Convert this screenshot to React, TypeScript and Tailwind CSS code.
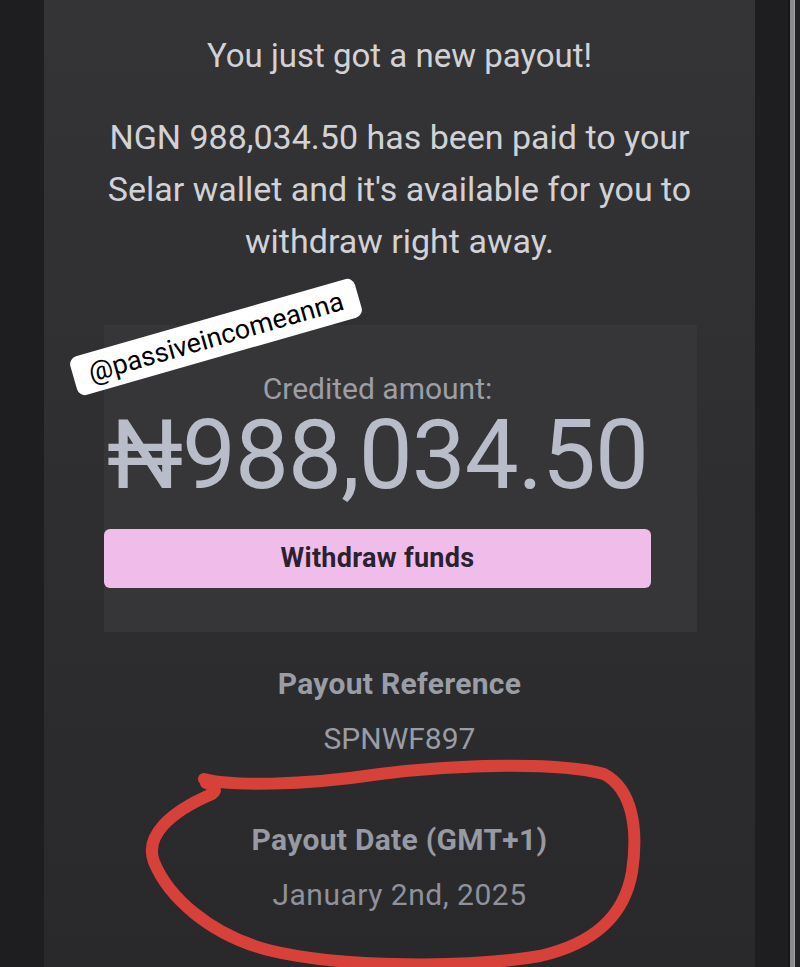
export default function App() {
  return (
    <div className="relative flex h-[967px] w-[800px] overflow-hidden bg-[#1f1f21] font-['Roboto',sans-serif]">
      <div className="w-[44px] shrink-0 bg-[#1e1e20]" />

      <div className="flex w-[711px] shrink-0 flex-col items-center bg-gradient-to-b from-[#343436] to-[#29292b] text-center">
        <p className="mt-[30px] text-[33px] leading-[52px] text-[#d2d2d6]">You just got a new payout!</p>
        <p className="mt-[29px] text-[34px] leading-[52px] text-[#d2d2d6]">
          NGN 988,034.50 has been paid to your
          <br />
          Selar wallet and it's available for you to
          <br />
          withdraw right away.
        </p>

        <div className="ml-[60px] mt-[58px] flex w-[593px] flex-col items-center self-start bg-[#363638] pb-[44px] pr-[46px] pt-[47px]">
          <p className="text-[30px] leading-[34px] text-[#9d9ea6]">Credited amount:</p>
          <p className="mt-[9px] whitespace-nowrap text-[96px] leading-[80px] tracking-[-1px] text-[#b9bdc9]">₦988,034.50</p>
          <button className="mt-[34px] h-[59px] w-[547px] rounded-[6px] bg-[#f0bdea] text-[27px] font-bold tracking-[0.3px] text-[#2b2230]">
            Withdraw funds
          </button>
        </div>

        <p className="mt-[32px] text-[30px] font-bold leading-[40px] tracking-[0.3px] text-[#9a9ca6]">Payout Reference</p>
        <p className="mt-[15px] text-[30px] leading-[40px] text-[#9a9ca6]">SPNWF897</p>
        <p className="mt-[61px] text-[30px] font-bold leading-[40px] tracking-[0.3px] text-[#9799a3]">Payout Date (GMT+1)</p>
        <p className="mt-[15px] text-[30px] leading-[40px] tracking-[0.5px] text-[#8f919b]">January 2nd, 2025</p>
      </div>

      <div className="flex w-[45px] shrink-0 bg-[#1e1e20]">
        <div className="w-[33px] bg-[#1e1e20]" />
        <div className="w-[2px] bg-[#161618]" />
        <div className="w-[4px] bg-[#8a8a8c]" />
        <div className="w-[1px] bg-[#a2a2a4]" />
        <div className="flex-1 bg-[#222224]" />
      </div>

      {/* story sticker */}
      <div className="absolute left-[68px] top-[317px] flex h-[40px] w-[296px] -rotate-[16deg] items-center justify-center rounded-[8px] bg-white">
        <span className="text-[27px] leading-none text-black">@passiveincomeanna</span>
      </div>

      {/* hand-drawn red loop */}
      <svg className="pointer-events-none absolute left-0 top-0" width="800" height="967" viewBox="0 0 800 967">
        <path
          d="M 204 779 C 230 786 300 786 380 774 C 460 764 560 762 604 774 C 634 790 638 832 632 872 C 624 918 592 944 540 956 C 470 968 340 968 268 950 C 208 934 168 896 154 862 C 144 836 170 812 212 794 C 218 790 214 786 206 783"
          fill="none"
          stroke="#d8413a"
          strokeWidth="12"
          strokeLinecap="round"
          strokeLinejoin="round"
        />
      </svg>
    </div>
  )
}
